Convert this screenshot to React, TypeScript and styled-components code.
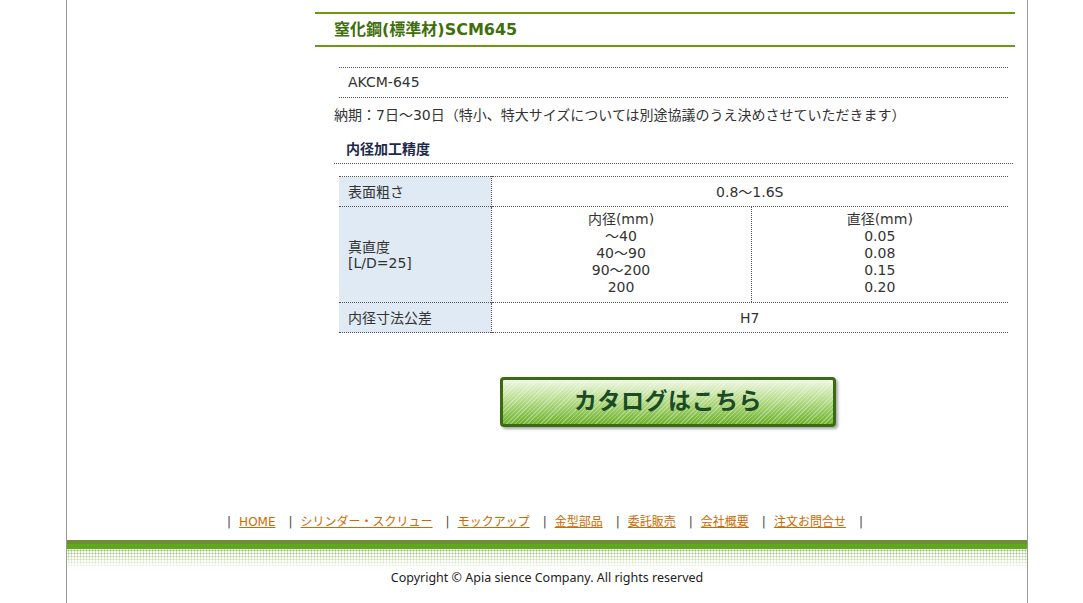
import React, { FC } from "react";
import styled, { createGlobalStyle } from "styled-components";

const GlobalStyle = createGlobalStyle`
  html, body {
    margin: 0;
    padding: 0;
    background: #fff;
  }
  body {
    font-family: "DejaVu Sans", "Noto Sans CJK JP", sans-serif;
    color: #333;
    font-size: 14px;
  }
`;

const navItems = [
  "HOME",
  "シリンダー・スクリュー",
  "モックアップ",
  "金型部品",
  "委託販売",
  "会社概要",
  "注文お問合せ",
];

const innerRows = [
  ["内径(mm)", "直径(mm)"],
  ["〜40", "0.05"],
  ["40〜90", "0.08"],
  ["90〜200", "0.15"],
  ["200", "0.20"],
];

const App: FC = () => {
  return (
    <>
      <GlobalStyle />
      <Wrapper>
        <Columns>
          <Sidebar />
          <Main>
            <Title>窒化鋼(標準材)SCM645</Title>
            <CodeBox>AKCM-645</CodeBox>
            <Note>納期：7日〜30日（特小、特大サイズについては別途協議のうえ決めさせていただきます）</Note>
            <SubHeading>内径加工精度</SubHeading>
            <SpecTable>
              <tbody>
                <tr>
                  <Label>表面粗さ</Label>
                  <Value>0.8〜1.6S</Value>
                </tr>
                <tr>
                  <Label>
                    真直度
                    <br />
                    [L/D=25]
                  </Label>
                  <SplitCell>
                    <SplitGrid>
                      <SplitCol>
                        {innerRows.map((r) => (
                          <SplitLine key={r[0]}>{r[0]}</SplitLine>
                        ))}
                      </SplitCol>
                      <SplitCol $last>
                        {innerRows.map((r) => (
                          <SplitLine key={r[1]}>{r[1]}</SplitLine>
                        ))}
                      </SplitCol>
                    </SplitGrid>
                  </SplitCell>
                </tr>
                <tr>
                  <Label>内径寸法公差</Label>
                  <Value>H7</Value>
                </tr>
              </tbody>
            </SpecTable>
            <ButtonRow>
              <CatalogButton href="#">カタログはこちら</CatalogButton>
            </ButtonRow>
          </Main>
        </Columns>

        <Footer>
          <Nav>
            {navItems.map((item) => (
              <NavItem key={item}>
                <Sep>|</Sep>
                <NavLink href="#">{item}</NavLink>
              </NavItem>
            ))}
            <Sep>|</Sep>
          </Nav>
          <Band />
          <Dots />
          <Copyright>Copyright © Apia sience Company. All rights reserved</Copyright>
        </Footer>
      </Wrapper>
    </>
  );
};

export default App;

const Wrapper = styled.div`
  width: 960px;
  margin-left: 66px;
  min-height: 603px;
  border-left: 1px solid #9a9a9a;
  border-right: 1px solid #9a9a9a;
  display: flex;
  flex-direction: column;
`;

const Columns = styled.div`
  display: flex;
`;

const Sidebar = styled.div`
  width: 248px;
  flex-shrink: 0;
`;

const Main = styled.div`
  width: 700px;
  padding-top: 12px;
`;

const Title = styled.h2`
  margin: 0;
  border-top: 2px solid #6b9a0b;
  border-bottom: 2px solid #6b9a0b;
  height: 31px;
  line-height: 31px;
  padding-left: 19px;
  font-size: 16px;
  font-weight: bold;
  color: #3f6f0c;
`;

const CodeBox = styled.div`
  margin: 20px 7px 0 24px;
  height: 29px;
  line-height: 29px;
  padding-left: 9px;
  border-top: 1px dotted #555;
  border-bottom: 1px dotted #555;
  font-size: 14px;
`;

const Note = styled.p`
  margin: 7px 0 0 19px;
  line-height: 20px;
  font-size: 14px;
`;

const SubHeading = styled.h3`
  margin: 11px 2px 0 19px;
  height: 27px;
  line-height: 27px;
  padding-left: 12px;
  border-bottom: 1px dotted #555;
  font-size: 14px;
  font-weight: bold;
  color: #1c2a48;
`;

const SpecTable = styled.table`
  margin: 12px 0 0 24px;
  width: 669px;
  border-collapse: collapse;
  border-top: 1px dotted #555;
  font-size: 14px;

  tr {
    border-bottom: 1px dotted #555;
  }
`;

const Label = styled.th`
  width: 152px;
  padding: 0 0 0 9px;
  box-sizing: border-box;
  background: #dfeaf4;
  border-right: 1px dotted #555;
  font-weight: normal;
  text-align: left;
  line-height: 16px;
  height: 29px;
`;

const Value = styled.td`
  text-align: center;
  height: 29px;
  line-height: 20px;
  padding: 0;
`;

const SplitCell = styled.td`
  padding: 0;
`;

const SplitGrid = styled.div`
  display: grid;
  grid-template-columns: 260px 1fr;
`;

const SplitCol = styled.div<{ $last?: boolean }>`
  padding: 4px 0 6px;
  text-align: center;
  border-right: ${(p) => (p.$last ? "none" : "1px dotted #555")};
`;

const SplitLine = styled.div`
  height: 17px;
  line-height: 17px;
`;

const ButtonRow = styled.div`
  display: flex;
  justify-content: center;
  margin-top: 44px;
  padding-left: 6px;
`;

const CatalogButton = styled.a`
  display: flex;
  align-items: center;
  justify-content: center;
  box-sizing: border-box;
  width: 336px;
  height: 50px;
  padding-bottom: 6px;
  border: 3px solid #3b6a12;
  border-radius: 4px;
  box-shadow: 2px 2px 3px rgba(0, 0, 0, 0.35);
  background-image: repeating-linear-gradient(
      135deg,
      rgba(255, 255, 255, 0.3) 0 1px,
      rgba(255, 255, 255, 0) 1px 3px
    ),
    linear-gradient(to bottom, #eef7e2 0%, #b8dc8c 45%, #6db22b 100%);
  color: #1b4a25;
  font-family: "Noto Sans CJK JP", sans-serif;
  font-size: 23px;
  font-weight: bold;
  line-height: 30px;
  text-decoration: none;
  letter-spacing: 0.5px;
`;

const Footer = styled.div`
  margin-top: 85px;
`;

const Nav = styled.div`
  display: flex;
  justify-content: center;
  align-items: center;
  height: 20px;
  font-size: 12px;
  line-height: 20px;
  padding-left: 4px;
`;

const NavItem = styled.span`
  display: inline-flex;
  align-items: center;
`;

const Sep = styled.span`
  color: #444;
  margin: 0 8px 0 0;
`;

const NavLink = styled.a`
  color: #cc6a00;
  text-decoration: underline;
  margin-right: 13px;
`;

const Band = styled.div`
  margin-top: 8px;
  height: 9px;
  background: linear-gradient(to bottom, #6f8d34 0 4px, #5ea81c 4px 9px);
`;

const Dots = styled.div`
  height: 20px;
  background-image: radial-gradient(#86b84a 0.9px, transparent 1.1px);
  background-size: 3px 3px;
  -webkit-mask-image: linear-gradient(to bottom, #000 0%, rgba(0, 0, 0, 0.5) 50%, transparent 100%);
  mask-image: linear-gradient(to bottom, #000 0%, rgba(0, 0, 0, 0.5) 50%, transparent 100%);
`;

const Copyright = styled.div`
  text-align: center;
  font-family: "Noto Sans", sans-serif;
  font-size: 12.5px;
  color: #222;
  line-height: 16px;
  padding-top: 1px;
  padding-bottom: 20px;
`;
